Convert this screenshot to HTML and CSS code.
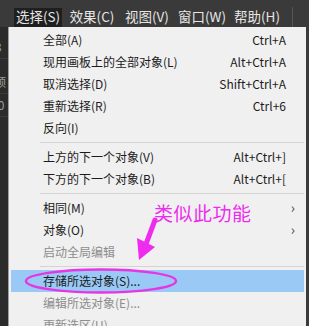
FILE: index.html
```html
<!DOCTYPE html>
<html lang="zh-CN">
<head>
    <meta charset="UTF-8">
    <meta name="viewport" content="width=device-width, initial-scale=1.0">
    <title>选择菜单</title>
    <link rel="stylesheet" href="styles.css">
</head>
<body>
    <!-- 顶部菜单栏 -->
    <div class="menubar">
        <span class="menubar-item active">选择(S)</span>
        <span class="menubar-item">效果(C)</span>
        <span class="menubar-item">视图(V)</span>
        <span class="menubar-item">窗口(W)</span>
        <span class="menubar-item">帮助(H)</span>
        <span class="menubar-split"></span>
    </div>

    <div class="workspace">
        <!-- 左侧被遮住的面板 -->
        <div class="side-panel">
            <div class="side-row r1">3</div>
            <div class="side-row r2">预</div>
            <div class="side-row r3">50</div>
        </div>

        <!-- 下拉菜单 -->
        <div class="dropdown">
            <div class="item"><span>全部(A)</span><span class="key">Ctrl+A</span></div>
            <div class="item"><span>现用画板上的全部对象(L)</span><span class="key">Alt+Ctrl+A</span></div>
            <div class="item"><span>取消选择(D)</span><span class="key">Shift+Ctrl+A</span></div>
            <div class="item"><span>重新选择(R)</span><span class="key">Ctrl+6</span></div>
            <div class="item"><span>反向(I)</span></div>
            <div class="sep"></div>
            <div class="item"><span>上方的下一个对象(V)</span><span class="key">Alt+Ctrl+]</span></div>
            <div class="item"><span>下方的下一个对象(B)</span><span class="key">Alt+Ctrl+[</span></div>
            <div class="sep"></div>
            <div class="item"><span>相同(M)</span><span class="sub">›</span></div>
            <div class="item"><span>对象(O)</span><span class="sub">›</span></div>
            <div class="item disabled"><span>启动全局编辑</span></div>
            <div class="sep"></div>
            <div class="item hover"><span>存储所选对象(S)...</span></div>
            <div class="item disabled"><span>编辑所选对象(E)...</span></div>
            <div class="item disabled"><span>更新选区(U)</span></div>
        </div>
        <div class="edge"></div>
    </div>

    <!-- 标注 -->
    <div class="note">类似此功能</div>
    <svg class="marks" width="309" height="326" viewBox="0 0 309 326">
        <path d="M155 220 L146 244" stroke="#ee2bee" stroke-width="5" stroke-linecap="round" fill="none"/>
        <path d="M137 238 L155 247 L139 260 Z" fill="#ee2bee"/>
        <ellipse cx="101" cy="281" rx="75" ry="11.5" stroke="#e535e5" stroke-width="2.5" fill="none"/>
    </svg>
</body>
</html>
```

FILE: styles.css
```css
body {
    margin: 0;
    width: 309px;
    height: 326px;
    overflow: hidden;
    background: #2f2f2f;
    font-family: "Microsoft YaHei", "Noto Sans CJK SC", sans-serif;
    position: relative;
}

/* 菜单栏 */
.menubar {
    height: 27px;
    background: #3a3a3a;
    display: flex;
    align-items: flex-end;
    padding-left: 14px;
    box-sizing: border-box;
}

.menubar-item {
    color: #e6e6e6;
    font-size: 13.5px;
    width: 48px;
    height: 19px;
    line-height: 17px;
    text-align: center;
    margin-right: 7px;
}

.menubar-item.active {
    background: #1f1f1f;
    margin-right: 6px;
}

.menubar-split {
    width: 1px;
    height: 20px;
    background: #555;
    margin-left: 4px;
}

/* 主区域 */
.workspace {
    display: flex;
    height: 299px;
}

.side-panel {
    width: 8px;
    background: #2b2b2b;
    overflow: hidden;
    color: #9a9a9a;
    font-size: 12px;
}

.side-row {
    height: 22px;
    line-height: 22px;
    border-bottom: 1px solid #3a3a3a;
    white-space: nowrap;
    margin-left: -4px;
}

.side-row.r1 { margin-top: 9px; margin-left: -5px; }
.side-row.r2 { margin-top: 12px; margin-left: -6px; }
.side-row.r3 { margin-left: -9px; }

.dropdown {
    width: 298px;
    background: #f0f0f0;
    border-left: 1px solid #9e9e9e;
    box-sizing: border-box;
    padding: 2px 2px 0 2px;
    font-size: 12px;
    color: #1b1b1b;
}

.edge {
    width: 3px;
    background: #3a3a3a;
}

.item {
    height: 22px;
    line-height: 22px;
    display: flex;
    justify-content: space-between;
    padding: 0 18px 0 32px;
    position: relative;
}

.item .key {
    color: #1b1b1b;
}

.item .sub {
    position: absolute;
    right: 9px;
    top: -1px;
    font-size: 14px;
    color: #444;
}

.item.disabled {
    color: #8d8d8d;
}

.item.hover {
    background: #99c9f4;
}

.sep {
    height: 7px;
    margin-left: 29px;
    position: relative;
}

.sep::after {
    content: "";
    position: absolute;
    left: 0;
    right: 0;
    top: 3px;
    height: 1px;
    background: #d4d4d4;
}

/* 标注 */
.note {
    position: absolute;
    left: 154px;
    top: 199px;
    font-size: 19px;
    letter-spacing: 0.5px;
    color: #ee2bee;
    font-family: "Microsoft YaHei", "Noto Sans CJK SC", sans-serif;
}

.marks {
    position: absolute;
    left: 0;
    top: 0;
}
```
